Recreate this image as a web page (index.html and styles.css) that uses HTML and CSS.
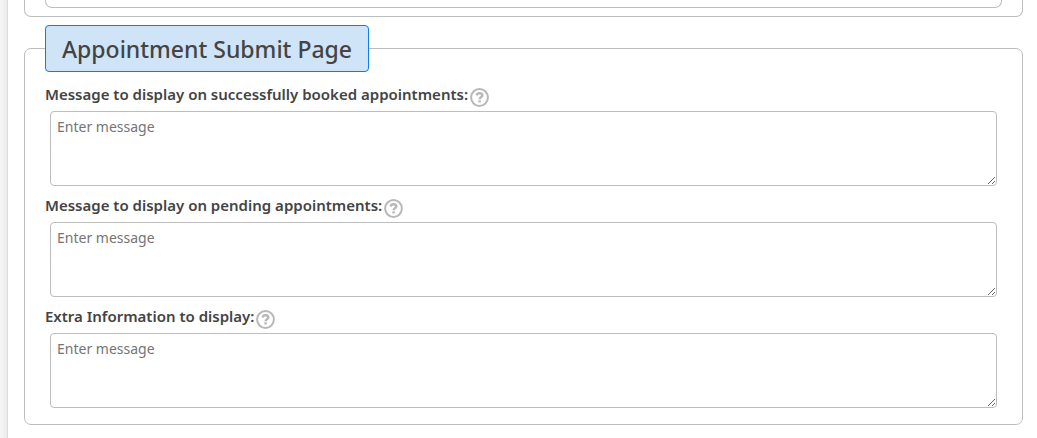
FILE: index.html
```html
<!DOCTYPE html>
<html lang="en">
<head>
<meta charset="utf-8">
<title>Appointment Settings</title>
<link rel="stylesheet" href="styles.css">
</head>
<body>
<svg class="sprite" aria-hidden="true">
  <symbol id="help" viewBox="0 0 19 19">
    <circle cx="9.5" cy="9.5" r="8.4" fill="none" stroke="currentColor" stroke-width="2"/>
    <path d="M6.7 7.5C6.9 5.9 8 5.2 9.5 5.2c1.6 0 2.8.8 2.8 2.2 0 1.8-2.7 1.8-2.7 3.8" fill="none" stroke="currentColor" stroke-width="2.4"/>
    <rect x="8.3" y="12.2" width="2.6" height="2.4" rx=".6" fill="currentColor"/>
  </symbol>
</svg>
<main class="panel">
  <section class="group group-previous"><div class="inner-box"></div></section>
  <fieldset class="group">
    <legend class="title">Appointment Submit Page</legend>
    <div class="fields">
      <div class="field">
        <div class="field-head">
          <label class="label" for="booked">Message to display on successfully booked appointments:</label>
          <svg class="help" role="img" aria-label="Help"><use href="#help"/></svg>
        </div>
        <textarea class="message" id="booked" placeholder="Enter message"></textarea>
      </div>
      <div class="field">
        <div class="field-head">
          <label class="label" for="pending">Message to display on pending appointments:</label>
          <svg class="help" role="img" aria-label="Help"><use href="#help"/></svg>
        </div>
        <textarea class="message" id="pending" placeholder="Enter message"></textarea>
      </div>
      <div class="field">
        <div class="field-head">
          <label class="label" for="extra">Extra Information to display:</label>
          <svg class="help" role="img" aria-label="Help"><use href="#help"/></svg>
        </div>
        <textarea class="message" id="extra" placeholder="Enter message"></textarea>
      </div>
    </div>
  </fieldset>
</main>
</body>
</html>
```

FILE: styles.css
```css
* {
  box-sizing: border-box;
}

body {
  margin: 0;
  padding-left: 7px;
  background: linear-gradient(to right, #f7f7f7, #ebebeb 7px);
  color: #444;
  font-family: "Segoe UI", "Noto Sans", sans-serif;
  font-size: 15px;
}

.sprite {
  display: none;
}

.panel {
  min-height: 100vh;
  padding: 0 14px 13px 16px;
  background: #fff;
  border-left: 1px solid #ddd;
}

.group {
  min-width: 0;
  margin: 0;
  padding: 0 25px 16px 20px;
  border: 1px solid #bdbdbd;
  border-radius: 7px;
}

.group-previous {
  margin-bottom: 8px;
  padding: 0 20px 8px;
  border-top: 0;
  border-radius: 0 0 7px 7px;
}

.inner-box {
  height: 8px;
  border: 1px solid #bdbdbd;
  border-top: 0;
  border-radius: 0 0 7px 7px;
}

.title {
  padding: 1px 16px 0;
  border: 1px solid #0b7df0;
  border-radius: 4px;
  background: #d0e4f8;
  font-size: 23px;
  font-weight: 500;
  line-height: 44px;
}

.fields {
  display: flex;
  flex-direction: column;
  gap: 9px;
  padding-top: 12px;
}

.field-head {
  display: flex;
  align-items: flex-start;
  gap: 2px;
  height: 24px;
}

.label {
  font-weight: 600;
  line-height: 20px;
}

.help {
  width: 19px;
  height: 19px;
  margin-top: 4px;
  color: #b8b8b8;
}

.message {
  display: block;
  width: calc(100% - 5px);
  height: 75px;
  margin: 3px 0 0 5px;
  padding: 5px 6px;
  border: 1px solid #bdbdbd;
  border-radius: 4px;
  background: #fff;
  color: #444;
  font: 14px/20px "Segoe UI", "Noto Sans", sans-serif;
  resize: both;
}

.message::placeholder {
  color: #757575;
  opacity: 1;
}
```
